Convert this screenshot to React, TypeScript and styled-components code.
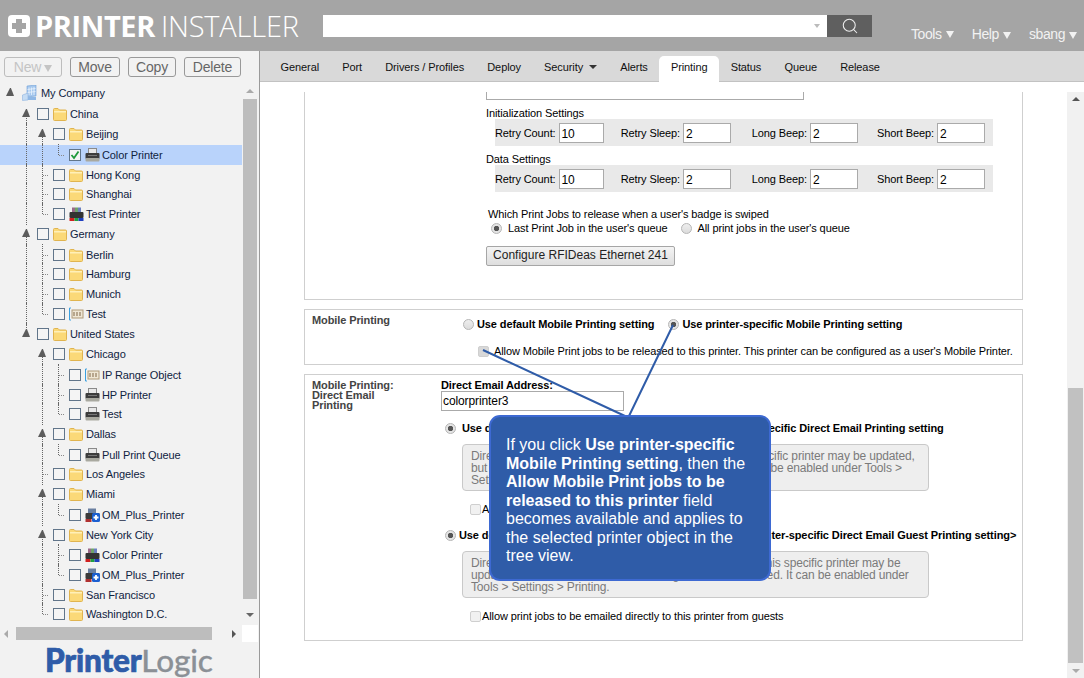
import React from 'react';
import styled, { createGlobalStyle } from 'styled-components';
import { Search } from 'lucide-react';

const Global = createGlobalStyle`
    html, body {
        margin: 0;
        padding: 0;
        width: 1084px;
        height: 678px;
        overflow: hidden;
        background: #fff;
        font-family: "Liberation Sans", Arial, sans-serif;
        font-size: 11px;
        letter-spacing: -0.1px;
        color: #000;
    }
    * { box-sizing: border-box; }
`

const Page = styled.div`
    position: relative;
    width: 1084px;
    height: 678px;
    display: flex;
    flex-direction: column;
    overflow: hidden;
`

/* ---------- header ---------- */
const Header = styled.header`
    height: 51px;
    flex: none;
    background: #a5a5a5;
    display: flex;
    align-items: flex-start;
`

const Brand = styled.div`
    width: 323px;
    height: 51px;
    flex: none;
    padding: 15px 0 0 8px;
    display: flex;
    color: #fff;
`

const BrandWords = styled.div`
    margin-left: 5px;
    height: 22px;
    line-height: 22px;
    font-family: "Open Sans", sans-serif;
    font-size: 29px;
    white-space: nowrap;
`

const BrandBold = styled.span`
    font-weight: 700;
    letter-spacing: -0.4px;
`

const BrandLight = styled.span`
    font-weight: 300;
    margin-left: 6px;
    letter-spacing: -0.2px;
`

const SearchBox = styled.div`
    margin-top: 15px;
    width: 504px;
    height: 22px;
    flex: none;
    background: #fff;
    display: flex;
    align-items: center;
    justify-content: flex-end;
    padding-right: 7px;
`

const SearchCaret = styled.span`
    width: 0;
    height: 0;
    border-left: 3.5px solid transparent;
    border-right: 3.5px solid transparent;
    border-top: 4px solid #bbb;
`

const SearchButton = styled.div`
    margin-top: 15px;
    width: 45px;
    height: 22px;
    flex: none;
    background: #5f5f5f;
    color: #eee;
    display: flex;
    align-items: center;
    justify-content: center;
`

const UserNav = styled.nav`
    margin-left: 39px;
    margin-top: 25px;
    display: flex;
    gap: 18px;
`

const NavItem = styled.span<{ $drop?: number }>`
    font-size: 14px;
    line-height: 16px;
    color: #f2f2f2;
    white-space: nowrap;
    letter-spacing: -0.4px;
    margin-top: ${p => p.$drop || 0}px;
    display: flex;
    align-items: center;
    gap: 4px;
`

const Caret = styled.span<{ $color: string }>`
    width: 0;
    height: 0;
    margin-top: 2px;
    border-left: 4px solid transparent;
    border-right: 4px solid transparent;
    border-top: 7px solid ${p => p.$color};
`

/* ---------- body / sidebar ---------- */
const Body = styled.div`
    flex: 1;
    display: flex;
    min-height: 0;
`

const Sidebar = styled.aside`
    width: 260px;
    flex: none;
    background: #f2f2f2;
    border-right: 1px solid #9a9a9a;
    display: flex;
    flex-direction: column;
`

const Toolbar = styled.div`
    height: 32px;
    flex: none;
    padding: 6px 0 0 4px;
    display: flex;
    gap: 8px;
`

const ToolButton = styled.button<{ $w: number; $off?: boolean }>`
    width: ${p => p.$w}px;
    height: 20px;
    padding: 0;
    background: #f2f2f2;
    border: 1px solid ${p => (p.$off ? '#bdbdbd' : '#999')};
    border-radius: 3px;
    font-family: inherit;
    font-size: 14px;
    line-height: 16px;
    letter-spacing: -0.2px;
    color: ${p => (p.$off ? '#c4c4c4' : '#666')};
    display: flex;
    align-items: center;
    justify-content: center;
    gap: 3px;
`

const TreeArea = styled.div`
    height: 542px;
    flex: none;
    display: flex;
`

const Tree = styled.div`
    width: 242px;
    flex: none;
`

const Row = styled.div<{ $h: number; $selected?: boolean }>`
    height: ${p => p.$h}px;
    padding-left: 2px;
    display: flex;
    align-items: flex-start;
    background: ${p => (p.$selected ? '#b9d3fb' : 'transparent')};
    color: #10233f;
    white-space: nowrap;
`

const Guide = styled.span<{ $kind: string }>`
    position: relative;
    width: 16px;
    height: 100%;
    flex: none;
    &::before {
        content: '';
        display: ${p => (p.$kind === ' ' || p.$kind === 's' ? 'none' : 'block')};
        position: absolute;
        left: 8px;
        top: ${p => (p.$kind === 'T' ? '10px' : '-1px')};
        bottom: ${p => (p.$kind === 'L' || p.$kind === 't' ? '50%' : '-1px')};
        border-left: 1px dotted #666;
    }
    &::after {
        content: '';
        display: ${p => (p.$kind === 'L' || p.$kind === '+' ? 'block' : 'none')};
        position: absolute;
        left: 9px;
        top: 10px;
        width: 5px;
        border-top: 1px dotted #888;
    }
`

const Twisty = styled.span`
    position: absolute;
    left: 4px;
    top: 5px;
    width: 8px;
    height: 8px;
    background: #5c5c5c;
    clip-path: polygon(50% 0, 62% 0, 100% 100%, 0 100%);
`

const Check = styled.span`
    width: 12px;
    height: 12px;
    flex: none;
    margin: 4px 0 0 3px;
    background: #f4f4f4;
    border: 1px solid #61758a;
    display: flex;
    align-items: center;
    justify-content: center;
`

const NodeIcon = styled.span`
    width: 16px;
    height: 16px;
    flex: none;
    margin: 2px 0 0 4px;
    display: flex;
    align-items: center;
`

const NodeLabel = styled.span<{ $root?: boolean }>`
    margin: 3px 0 0 ${p => (p.$root ? 3 : 1)}px;
    line-height: 14px;
`

const VBar = styled.div`
    width: 16px;
    flex: none;
    display: flex;
    flex-direction: column;
    align-items: center;
    padding-top: 6px;
`

const BarThumbV = styled.div`
    width: 14px;
    height: 500px;
    margin: 6px 0 14px;
    background: #bdbdbd;
`

const HBar = styled.div`
    height: 17px;
    flex: none;
    display: flex;
    align-items: center;
`

const HTrack = styled.div`
    width: 242px;
    height: 17px;
    flex: none;
    display: flex;
    align-items: center;
    padding-left: 4px;
`

const HThumb = styled.div`
    width: 196px;
    height: 13px;
    margin: 0 20px 0 8px;
    background: #bdbdbd;
`

const Corner = styled.div`
    width: 16px;
    height: 17px;
    flex: none;
    background: #fff;
`

const Arrow = styled.span<{ $dir: 'up' | 'down' | 'left' | 'right'; $color?: string }>`
    width: 0;
    height: 0;
    flex: none;
    ${p => {
        const c = p.$color || '#7a7a7a';
        if (p.$dir === 'up') return `border-left:4px solid transparent;border-right:4px solid transparent;border-bottom:4px solid ${c};`;
        if (p.$dir === 'down') return `border-left:4px solid transparent;border-right:4px solid transparent;border-top:4px solid ${c};`;
        if (p.$dir === 'left') return `border-top:4px solid transparent;border-bottom:4px solid transparent;border-right:4px solid ${c};`;
        return `border-top:4px solid transparent;border-bottom:4px solid transparent;border-left:4px solid ${c};`;
    }}
`

const LogoRow = styled.div`
    flex: 1;
    padding: 1px 0 0 45px;
    font-family: Lato, "Open Sans", sans-serif;
    font-size: 31.5px;
    line-height: 34px;
    letter-spacing: -0.2px;
    white-space: nowrap;
`

const LogoBold = styled.span`
    font-weight: 900;
    color: #2f5ca8;
    -webkit-text-stroke: 0.7px #2f5ca8;
`

const LogoLight = styled.span`
    font-weight: 500;
    color: #8b9096;
    -webkit-text-stroke: 0.3px #8b9096;
`

/* ---------- main ---------- */
const Main = styled.main`
    flex: 1;
    min-width: 0;
    display: flex;
    flex-direction: column;
`

const TabBar = styled.div`
    height: 31px;
    flex: none;
    background: #d9d9d9;
    border-bottom: 1px solid #c2c2c2;
    padding: 5px 0 0 9px;
    display: flex;
`

const Tab = styled.div<{ $active?: boolean }>`
    height: 26px;
    padding: 0 11.6px 4px;
    white-space: nowrap;
    color: #111;
    border-radius: 5px 5px 0 0;
    background: ${p => (p.$active ? '#fff' : 'transparent')};
    display: flex;
    align-items: center;
    gap: 6px;
`

const Pane = styled.div`
    flex: 1;
    min-height: 0;
    padding-top: 10px;
    display: flex;
`

const Scroller = styled.div`
    width: 807px;
    flex: none;
    padding-left: 44px;
    overflow: hidden;
`

const PageBar = styled.div`
    width: 17px;
    flex: none;
    background: #f1f1f1;
    display: flex;
    flex-direction: column;
    align-items: center;
    padding-top: 5px;
`

const PageThumb = styled.div`
    width: 15px;
    height: 275px;
    margin: 287px 0 6px;
    background: #c1c1c1;
`

const Section = styled.section<{ $h: number; $open?: boolean }>`
    width: 719px;
    height: ${p => p.$h}px;
    border: 1px solid #cfcfcf;
    border-top: ${p => (p.$open ? '0' : '1px solid #cfcfcf')};
    margin-bottom: 9px;
`

const FirstBody = styled.div`
    padding-left: 181px;
`

const TextAreaEnd = styled.div`
    width: 318px;
    height: 8px;
    border: 1px solid #aaa;
    border-top: 0;
`

const Caption = styled.div`
    margin-top: 8px;
    height: 13px;
    line-height: 11px;
`

const SettingsRow = styled.div`
    margin: -2px 0 0 9px;
    width: 498px;
    height: 27px;
    background: #e9e9e9;
    display: grid;
    grid-template-columns: 109px 127px 127px 127px;
    align-items: center;
`

const Setting = styled.label`
    display: flex;
    justify-content: flex-end;
    align-items: center;
    gap: 3px;
    white-space: nowrap;
`

const NumberBox = styled.span`
    width: 48px;
    height: 20px;
    background: #fff;
    border: 1px solid #aaa;
    padding-left: 2px;
    font-size: 12px;
    line-height: 20px;
`

const WhichText = styled.div`
    margin: 16px 0 0 2px;
    height: 12px;
    line-height: 12px;
`

const RadioLine = styled.div<{ $left?: number; $top?: number }>`
    display: flex;
    align-items: center;
    height: 14px;
    margin-left: ${p => p.$left || 0}px;
    margin-top: ${p => p.$top || 0}px;
    white-space: nowrap;
`

const Radio = styled.span<{ $on?: boolean; $right: number }>`
    width: 11px;
    height: 11px;
    flex: none;
    margin-right: ${p => p.$right}px;
    border-radius: 50%;
    border: 1px solid #b5b5b5;
    background: ${p => (p.$on ? 'radial-gradient(circle, #555 0 2.4px, #e4e4e4 3px)' : 'linear-gradient(#eee, #dcdcdc)')};
`

const RadioText = styled.span<{ $gapAfter?: number; $bold?: boolean }>`
    font-weight: ${p => (p.$bold ? 700 : 400)};
    margin-right: ${p => p.$gapAfter || 0}px;
`

const Box = styled.span<{ $dark?: boolean; $right: number }>`
    width: 11px;
    height: 11px;
    flex: none;
    margin-right: ${p => p.$right}px;
    border-radius: 2px;
    border: 1px solid #cfcfcf;
    background: ${p => (p.$dark ? '#d8d8d8' : '#f1f1f1')};
`

const ConfigureButton = styled.button`
    display: block;
    margin: 11px 0 0 0;
    width: 189px;
    height: 20px;
    padding: 0 0 2px;
    border: 1px solid #a6a6a6;
    border-radius: 2px;
    background: linear-gradient(#f4f4f4, #dedede);
    font-family: inherit;
    font-size: 12px;
    color: #222;
`

const SideLabel = styled.div`
    color: #444;
    font-weight: 700;
    line-height: 10px;
`

const MobileGrid = styled.div`
    padding: 5px 0 0 7px;
    display: flex;
`

const MobileLabelCol = styled.div`
    width: 151px;
    flex: none;
`

const MobileCol = styled.div`
    padding-top: 2px;
`

const DirectGrid = styled.div`
    display: flex;
    padding: 5px 0 0 7px;
`

const DirectLabelCol = styled.div`
    width: 129px;
    flex: none;
`

const DirectCol = styled.div`
    flex: 1;
    min-width: 0;
`

const FieldLabel = styled.div`
    font-weight: 700;
    line-height: 11px;
    height: 11px;
`

const AddressBox = styled.div`
    width: 183px;
    height: 20px;
    border: 1px solid #aaa;
    padding-left: 1px;
    font-size: 12px;
    line-height: 18px;
`

const Note = styled.div<{ $top: number }>`
    margin: ${p => p.$top}px 0 0 21px;
    width: 467px;
    height: 47px;
    padding: 5px 0 0 8px;
    background: #eeeeee;
    border: 1px solid #c9c9c9;
    border-radius: 4px;
    color: #7a7a7a;
    font-size: 12px;
    letter-spacing: -0.15px;
    line-height: 12px;
    white-space: nowrap;
`

/* ---------- callout ---------- */
const Leaders = styled.svg`
    position: absolute;
    left: 0;
    top: 0;
    pointer-events: none;
`

const Callout = styled.div`
    position: absolute;
    left: 489px;
    top: 415px;
    width: 282px;
    height: 166px;
    padding: 19px 10px 0 15px;
    background: #2f5ca8;
    border: 2px solid #3d69d2;
    border-radius: 11px;
    color: #fff;
    font-size: 16px;
    letter-spacing: 0;
    line-height: 18.5px;
`

/* ---------- drawings ---------- */
const FolderIcon = () => (
    <svg width="14" height="13" viewBox="0 0 14 13">
        <path d="M0.5 3V1.5Q0.5 0.5 1.5 0.5H5L6.5 2H12.5Q13.5 2 13.5 3V11.5Q13.5 12.5 12.5 12.5H1.5Q0.5 12.5 0.5 11.5Z" fill="#fbd978" stroke="#e0b450" />
        <rect x="1" y="3" width="12" height="1.5" fill="#fff0b8" />
    </svg>
)

const PrinterIcon = () => (
    <svg width="15" height="14" viewBox="0 0 15 14">
        <rect x="3.5" y="0.5" width="8" height="5" fill="#e8e8e8" stroke="#8a8a8a" />
        <rect x="0.5" y="5" width="14" height="6" rx="1" fill="#3c3c3c" />
        <rect x="0.5" y="10" width="14" height="3.5" rx="1" fill="#a9a9a0" />
        <rect x="3" y="7" width="9" height="1" fill="#777" />
    </svg>
)

const ColorPrinterIcon = () => (
    <svg width="15" height="15" viewBox="0 0 15 15">
        <rect x="3" y="0.5" width="3" height="5" fill="#9a6a8a" />
        <rect x="6" y="0.5" width="3" height="5" fill="#6fa36a" />
        <rect x="9" y="0.5" width="3" height="5" fill="#6a7fc0" />
        <rect x="0.5" y="5" width="14" height="6" rx="1" fill="#333" />
        <rect x="0.5" y="11" width="5" height="3" fill="#d02020" />
        <rect x="5.5" y="11" width="4" height="3" fill="#20a040" />
        <rect x="9.5" y="11" width="5" height="3" fill="#2040c0" />
    </svg>
)

const PlusPrinterIcon = () => (
    <svg width="15" height="15" viewBox="0 0 15 15">
        <rect x="3" y="0.5" width="8" height="5" fill="#6a7fa0" />
        <rect x="0.5" y="5" width="14" height="6" rx="1" fill="#3a3a3a" />
        <rect x="0.5" y="11" width="6" height="3" fill="#b03030" />
        <rect x="7" y="5" width="8" height="9" rx="1.5" fill="#1c5fd0" />
        <path d="M11 7V12M8.5 9.5H13.5" stroke="#fff" strokeWidth="1.8" />
    </svg>
)

const RangeIcon = () => (
    <svg width="15" height="14" viewBox="0 0 15 14">
        <path d="M2 1H0.5V13H2" fill="none" stroke="#3aa0e0" />
        <rect x="3" y="3" width="11" height="8" fill="#efe6d4" stroke="#b09a78" />
        <path d="M5 5V9M8 5V9M11 5V9" stroke="#a08a70" strokeWidth="1.4" />
    </svg>
)

const CompanyIcon = () => (
    <svg width="15" height="16" viewBox="0 0 15 16">
        <path d="M5 1L14 0V11L5 12Z" fill="#a6c8ee" stroke="#6f9fd6" strokeWidth="0.6" />
        <path d="M7 2.5V10M9.5 2.5V10M12 2V10M5.5 4.5L13.5 3.5M5.5 7.5L13.5 6.5" stroke="#e8f2fc" strokeWidth="0.8" />
        <path d="M0.5 10L6 8V15L0.5 15.5Z" fill="#c5dcf4" stroke="#8db4e0" strokeWidth="0.6" />
        <path d="M6 12H14V15H6Z" fill="#8fb8e6" />
    </svg>
)

const TickMark = () => (
    <svg width="10" height="10" viewBox="0 0 10 10">
        <path d="M1.5 5L4 8L8.5 1.5" fill="none" stroke="#1f9a3a" strokeWidth="1.8" />
    </svg>
)

const LogoMark = () => (
    <svg width="22" height="22" viewBox="0 0 22 22">
        <rect width="22" height="22" rx="4" fill="#fff" />
        <path d="M8 4H14V8H18V14H14V18H8V14H4V8H8Z" fill="#a5a5a5" />
    </svg>
)

type IconKind = 'folder' | 'printer' | 'color' | 'plus' | 'range' | 'company';

const icons: Record<IconKind, React.ReactNode> = {
    folder: <FolderIcon />,
    printer: <PrinterIcon />,
    color: <ColorPrinterIcon />,
    plus: <PlusPrinterIcon />,
    range: <RangeIcon />,
    company: <CompanyIcon />,
};

type TreeNode = { guides: string; label: string; icon: IconKind; checked?: boolean; selected?: boolean };

const treeNodes: TreeNode[] = [
    { guides: 's', label: 'My Company', icon: 'company' },
    { guides: ' T', label: 'China', icon: 'folder' },
    { guides: ' |T', label: 'Beijing', icon: 'folder' },
    { guides: ' ||L', label: 'Color Printer', icon: 'printer', checked: true, selected: true },
    { guides: ' |+', label: 'Hong Kong', icon: 'folder' },
    { guides: ' |+', label: 'Shanghai', icon: 'folder' },
    { guides: ' |L', label: 'Test Printer', icon: 'color' },
    { guides: ' T', label: 'Germany', icon: 'folder' },
    { guides: ' |+', label: 'Berlin', icon: 'folder' },
    { guides: ' |+', label: 'Hamburg', icon: 'folder' },
    { guides: ' |+', label: 'Munich', icon: 'folder' },
    { guides: ' |L', label: 'Test', icon: 'range' },
    { guides: ' t', label: 'United States', icon: 'folder' },
    { guides: '  T', label: 'Chicago', icon: 'folder' },
    { guides: '  |+', label: 'IP Range Object', icon: 'range' },
    { guides: '  |+', label: 'HP Printer', icon: 'printer' },
    { guides: '  |L', label: 'Test', icon: 'printer' },
    { guides: '  T', label: 'Dallas', icon: 'folder' },
    { guides: '  |L', label: 'Pull Print Queue', icon: 'printer' },
    { guides: '  +', label: 'Los Angeles', icon: 'folder' },
    { guides: '  T', label: 'Miami', icon: 'folder' },
    { guides: '  |L', label: 'OM_Plus_Printer', icon: 'plus' },
    { guides: '  T', label: 'New York City', icon: 'folder' },
    { guides: '  |+', label: 'Color Printer', icon: 'color' },
    { guides: '  |L', label: 'OM_Plus_Printer', icon: 'plus' },
    { guides: '  +', label: 'San Francisco', icon: 'folder' },
    { guides: '  L', label: 'Washington D.C.', icon: 'folder' },
];

// the tree rows of the real page are not even, they snap between 19 and 21px
const rowHeights = [21, 20, 21, 20, 19, 20, 20, 21, 19, 20, 20, 20, 20, 21, 20, 19, 20, 21, 19, 20, 21, 20, 20, 20, 20, 19, 20];

const tabs = ['General', 'Port', 'Drivers / Profiles', 'Deploy', 'Security', 'Alerts', 'Printing', 'Status', 'Queue', 'Release'];

function SettingsLine() {
    return (
        <SettingsRow>
            <Setting>Retry Count:<NumberBox>10</NumberBox></Setting>
            <Setting>Retry Sleep:<NumberBox>2</NumberBox></Setting>
            <Setting>Long Beep:<NumberBox>2</NumberBox></Setting>
            <Setting>Short Beep:<NumberBox>2</NumberBox></Setting>
        </SettingsRow>
    );
}

export default function App(): JSX.Element {
    return (
        <Page>
            <Global />
            <Header>
                <Brand>
                    <LogoMark />
                    <BrandWords>
                        <BrandBold>PRINTER</BrandBold>
                        <BrandLight>INSTALLER</BrandLight>
                    </BrandWords>
                </Brand>
                <SearchBox><SearchCaret /></SearchBox>
                <SearchButton><Search size={18} strokeWidth={1.4} /></SearchButton>
                <UserNav>
                    <NavItem>Tools<Caret $color="#f2f2f2" /></NavItem>
                    <NavItem $drop={1}>Help<Caret $color="#f2f2f2" /></NavItem>
                    <NavItem $drop={1}>sbang<Caret $color="#f2f2f2" /></NavItem>
                </UserNav>
            </Header>
            <Body>
                <Sidebar>
                    <Toolbar>
                        <ToolButton $w={58} $off>New<Caret $color="#c4c4c4" /></ToolButton>
                        <ToolButton $w={50}>Move</ToolButton>
                        <ToolButton $w={48}>Copy</ToolButton>
                        <ToolButton $w={57}>Delete</ToolButton>
                    </Toolbar>
                    <TreeArea>
                        <Tree>
                            {treeNodes.map((n, i) => (
                                <Row key={i} $h={rowHeights[i]} $selected={n.selected}>
                                    {n.guides.split('').map((g, j) => (
                                        <Guide key={j} $kind={g}>
                                            {(g === 'T' || g === 't' || g === 's') && <Twisty />}
                                        </Guide>
                                    ))}
                                    {i > 0 && <Check>{n.checked && <TickMark />}</Check>}
                                    <NodeIcon>{icons[n.icon]}</NodeIcon>
                                    <NodeLabel $root={i === 0}>{n.label}</NodeLabel>
                                </Row>
                            ))}
                        </Tree>
                        <VBar>
                            <Arrow $dir="up" $color="#aaa" />
                            <BarThumbV />
                            <Arrow $dir="down" $color="#666" />
                        </VBar>
                    </TreeArea>
                    <HBar>
                        <HTrack>
                            <Arrow $dir="left" $color="#aaa" />
                            <HThumb />
                            <Arrow $dir="right" $color="#555" />
                        </HTrack>
                        <Corner />
                    </HBar>
                    <LogoRow><LogoBold>Printer</LogoBold><LogoLight>Logic</LogoLight></LogoRow>
                </Sidebar>
                <Main>
                    <TabBar>
                        {tabs.map(t => (
                            <Tab key={t} $active={t === 'Printing'}>
                                {t}
                                {t === 'Security' && <Arrow $dir="down" $color="#333" />}
                            </Tab>
                        ))}
                    </TabBar>
                    <Pane>
                        <Scroller>
                            <Section $h={208} $open>
                                <FirstBody>
                                    <TextAreaEnd />
                                    <Caption>Initialization Settings</Caption>
                                    <SettingsLine />
                                    <Caption>Data Settings</Caption>
                                    <SettingsLine />
                                    <WhichText>Which Print Jobs to release when a user's badge is swiped</WhichText>
                                    <RadioLine $left={5} $top={1}>
                                        <Radio $on $right={6} />
                                        <RadioText $gapAfter={13}>Last Print Job in the user's queue</RadioText>
                                        <Radio $right={6} />
                                        <RadioText>All print jobs in the user's queue</RadioText>
                                    </RadioLine>
                                    <ConfigureButton>Configure RFIDeas Ethernet 241</ConfigureButton>
                                </FirstBody>
                            </Section>
                            <Section $h={56}>
                                <MobileGrid>
                                    <MobileLabelCol><SideLabel>Mobile Printing</SideLabel></MobileLabelCol>
                                    <MobileCol>
                                        <RadioLine>
                                            <Radio $right={3} />
                                            <RadioText $bold $gapAfter={14}>Use default Mobile Printing setting</RadioText>
                                            <Radio $on $right={3} />
                                            <RadioText $bold>Use printer-specific Mobile Printing setting</RadioText>
                                        </RadioLine>
                                        <RadioLine $left={15} $top={13}>
                                            <Box $dark $right={5} />
                                            <RadioText>Allow Mobile Print jobs to be released to this printer. This printer can be configured as a user's Mobile Printer.</RadioText>
                                        </RadioLine>
                                    </MobileCol>
                                </MobileGrid>
                            </Section>
                            <Section $h={267}>
                                <DirectGrid>
                                    <DirectLabelCol>
                                        <SideLabel>Mobile Printing:<br />Direct Email<br />Printing</SideLabel>
                                    </DirectLabelCol>
                                    <DirectCol>
                                        <FieldLabel>Direct Email Address:</FieldLabel>
                                        <AddressBox>colorprinter3</AddressBox>
                                        <RadioLine $left={4} $top={10}>
                                            <Radio $on $right={6} />
                                            <RadioText $bold $gapAfter={13}>Use default Direct Email Printing setting</RadioText>
                                            <Radio $right={4} />
                                            <RadioText $bold>Use printer-specific Direct Email Printing setting</RadioText>
                                        </RadioLine>
                                        <Note $top={9}>
                                            Direct Email Printing permissions and settings for this specific printer may be updated,<br />
                                            but Direct Email Printing is not currently accessible. It can be enabled under Tools &gt;<br />
                                            Settings &gt; Printing.
                                        </Note>
                                        <RadioLine $left={29} $top={11}>
                                            <Box $right={1} />
                                            <RadioText>Allow print jobs to be emailed directly to this printer</RadioText>
                                        </RadioLine>
                                        <RadioLine $left={4} $top={12}>
                                            <Radio $on $right={3} />
                                            <RadioText $bold $gapAfter={15}>Use default Direct Email Guest Printing setting</RadioText>
                                            <Radio $right={4} />
                                            <RadioText $bold>Use printer-specific Direct Email Guest Printing setting&gt;</RadioText>
                                        </RadioLine>
                                        <Note $top={9}>
                                            Direct Email Guest Printing permissions and settings for this specific printer may be<br />
                                            updated, but Direct Email Guest Printing is not now enabled. It can be enabled under<br />
                                            Tools &gt; Settings &gt; Printing.
                                        </Note>
                                        <RadioLine $left={29} $top={11}>
                                            <Box $right={1} />
                                            <RadioText>Allow print jobs to be emailed directly to this printer from guests</RadioText>
                                        </RadioLine>
                                    </DirectCol>
                                </DirectGrid>
                            </Section>
                        </Scroller>
                        <PageBar>
                            <Arrow $dir="up" $color="#555" />
                            <PageThumb />
                            <Arrow $dir="down" $color="#aaa" />
                        </PageBar>
                    </Pane>
                </Main>
            </Body>
            <Leaders width="1084" height="678" viewBox="0 0 1084 678">
                <path d="M673 325L629 416M483 350L625 416" stroke="#2f5ca8" strokeWidth="2" fill="none" />
            </Leaders>
            <Callout>
                If you click <b>Use printer-specific Mobile Printing setting</b>, then the <b>Allow Mobile Print jobs to be released to this printer</b> field becomes available and applies to the selected printer object in the tree view.
            </Callout>
        </Page>
    );
}
